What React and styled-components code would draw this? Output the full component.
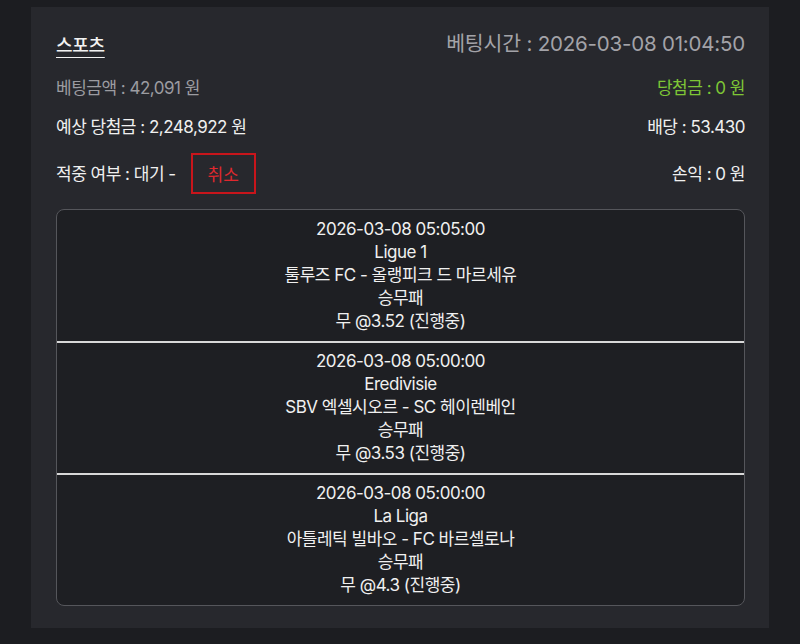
import React from "react";
import styled, { createGlobalStyle } from "styled-components";

const Global = createGlobalStyle`
  html, body { margin: 0; padding: 0; background: #1c1d21; }
  body { font-family: "Inter", "Noto Sans CJK KR", sans-serif; }
`;

const Page = styled.div`
  padding: 7px 31px 15px 31px;
`;

const Card = styled.div`
  background: #27282d;
  padding: 24px 24px 22px 25px;
  display: flex;
  flex-direction: column;
`;

const Row = styled.div`
  display: flex;
  justify-content: space-between;
  align-items: center;
  margin-top: ${(p) => p.$gap || 0}px;
  min-height: ${(p) => p.$h || 24}px;
`;

const Title = styled.span`
  color: #f2f2f2;
  font-size: 18px;
  font-weight: 500;
  letter-spacing: -0.3px;
  text-decoration: underline;
  text-underline-offset: 5px;
  text-decoration-thickness: 1px;
`;

const Text = styled.span`
  color: ${(p) => p.$color || "#f0f0f0"};
  font-size: ${(p) => p.$size || 17}px;
  letter-spacing: ${(p) => (p.$ls !== undefined ? p.$ls : -0.5)}px;
  line-height: 24px;
`;

const Left = styled.div`
  display: flex;
  align-items: center;
  gap: 15px;
`;

const CancelButton = styled.button`
  width: 65px;
  height: 41px;
  background: transparent;
  border: 2px solid #c8151b;
  color: #e0282e;
  font-family: inherit;
  font-size: 17px;
  padding: 0;
  cursor: pointer;
`;

const Games = styled.div`
  margin-top: 15px;
  background: #1e1f23;
  border: 1px solid #55565b;
  border-radius: 8px;
  overflow: hidden;
`;

const Game = styled.div`
  display: flex;
  flex-direction: column;
  align-items: center;
  padding: ${(p) => (p.$first ? "8px 0 8px" : "7px 0 8px")};
  border-top: ${(p) => (p.$first ? "none" : "2px solid #d8d8d8")};
`;

const Line = styled.div`
  color: #f0f0f0;
  font-size: 17px;
  line-height: 23px;
  letter-spacing: -0.5px;
  text-align: center;
`;

const games = [
  {
    time: "2026-03-08 05:05:00",
    league: "Ligue 1",
    match: "툴루즈 FC - 올랭피크 드 마르세유",
    market: "승무패",
    pick: "무 @3.52 (진행중)",
  },
  {
    time: "2026-03-08 05:00:00",
    league: "Eredivisie",
    match: "SBV 엑셀시오르 - SC 헤이렌베인",
    market: "승무패",
    pick: "무 @3.53 (진행중)",
  },
  {
    time: "2026-03-08 05:00:00",
    league: "La Liga",
    match: "아틀레틱 빌바오 - FC 바르셀로나",
    market: "승무패",
    pick: "무 @4.3 (진행중)",
  },
];

export default function App() {
  return (
    <>
      <Global />
      <Page>
        <Card>
          <Row>
            <Title>스포츠</Title>
            <Text $color="#a3a3a8" $size={20.5} $ls={-0.2}>베팅시간 : 2026-03-08 01:04:50</Text>
          </Row>
          <Row $gap={19}>
            <Text $color="#9c9ca1">베팅금액 : 42,091 원</Text>
            <Text $color="#7ec636">당첨금 : 0 원</Text>
          </Row>
          <Row $gap={15}>
            <Text>예상 당첨금 : 2,248,922 원</Text>
            <Text>배당 : 53.430</Text>
          </Row>
          <Row $gap={14} $h={41}>
            <Left>
              <Text>적중 여부 : 대기 -</Text>
              <CancelButton>취소</CancelButton>
            </Left>
            <Text>손익 : 0 원</Text>
          </Row>
          <Games>
            {games.map((g, i) => (
              <Game key={i} $first={i === 0}>
                <Line>{g.time}</Line>
                <Line>{g.league}</Line>
                <Line>{g.match}</Line>
                <Line>{g.market}</Line>
                <Line>{g.pick}</Line>
              </Game>
            ))}
          </Games>
        </Card>
      </Page>
    </>
  );
}
